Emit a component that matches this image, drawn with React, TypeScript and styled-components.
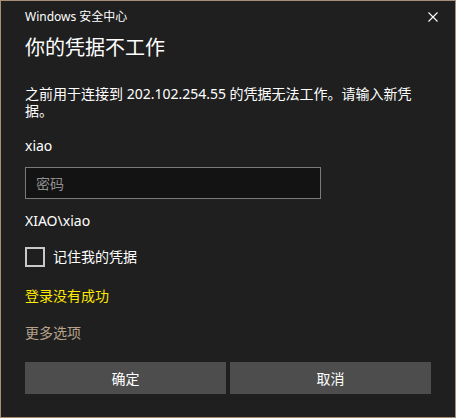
import React from "react";
import styled, { createGlobalStyle } from "styled-components";

const Global = createGlobalStyle`
  html, body { margin: 0; padding: 0; background: #1f1f1f; }
  * { box-sizing: border-box; }
`;

const FONT = `"Segoe UI", "Noto Sans", "Noto Sans CJK SC", sans-serif`;

const Window = styled.div`
  width: 456px;
  height: 418px;
  border: 1px solid #a68d74;
  background: #1f1f1f;
  color: #ffffff;
  font-family: ${FONT};
  display: flex;
  flex-direction: column;
`;

const TitleBar = styled.div`
  height: 32px;
  display: flex;
  align-items: center;
  justify-content: space-between;
  padding-left: 24px;
`;

const TitleText = styled.span`
  font-size: 12px;
  line-height: 16px;
  color: #ffffff;
`;

const CloseButton = styled.div`
  width: 44px;
  height: 32px;
  display: flex;
  align-items: center;
  justify-content: center;
`;

const Body = styled.div`
  display: flex;
  flex-direction: column;
  padding: 0 24px;
`;

const Heading = styled.div`
  font-size: 20px;
  line-height: 28px;
  margin-top: 1px;
`;

const Text = styled.div<{ $mt: number; $color?: string }>`
  font-size: 14px;
  line-height: 20px;
  margin-top: ${(p) => p.$mt}px;
  color: ${(p) => p.$color || "#ffffff"};
`;

const Paragraph = styled.div`
  font-size: 14px;
  line-height: 17px;
  margin-top: 23px;
  width: 406px;
  line-break: strict;
`;

const Input = styled.div`
  margin-top: 11px;
  width: 296px;
  height: 32px;
  border: 1px solid #7a7a7a;
  background: #131313;
  display: flex;
  align-items: center;
  padding-left: 10px;
  font-size: 14px;
  color: #8f8f8f;
`;

const CheckRow = styled.div`
  margin-top: 16px;
  display: flex;
  align-items: center;
  gap: 8px;
  height: 20px;
  font-size: 14px;
  line-height: 20px;
`;

const Box = styled.div`
  width: 20px;
  height: 20px;
  border: 2px solid #c9c9c9;
`;

const Buttons = styled.div`
  margin-top: 19px;
  display: grid;
  grid-template-columns: 1fr 1fr;
  gap: 4px;
`;

const Button = styled.div`
  height: 32px;
  background: #4d4d4d;
  display: flex;
  align-items: center;
  justify-content: center;
  font-size: 14px;
  color: #ffffff;
`;

export default function App() {
  return (
    <>
      <Global />
      <Window>
        <TitleBar>
          <TitleText>Windows 安全中心</TitleText>
          <CloseButton>
            <svg width="10" height="10" viewBox="0 0 10 10">
              <path d="M0.5 0.5 L9.5 9.5 M9.5 0.5 L0.5 9.5" stroke="#ffffff" strokeWidth="1.1" fill="none" />
            </svg>
          </CloseButton>
        </TitleBar>
        <Body>
          <Heading>你的凭据不工作</Heading>
          <Paragraph>之前用于连接到 202.102.254.55 的凭据无法工作。请输入新凭据。</Paragraph>
          <Text $mt={17}>xiao</Text>
          <Input>密码</Input>
          <Text $mt={12}>XIAO\xiao</Text>
          <CheckRow>
            <Box />
            <span>记住我的凭据</span>
          </CheckRow>
          <Text $mt={19} $color="#ffea00">登录没有成功</Text>
          <Text $mt={17} $color="#b7a18b">更多选项</Text>
          <Buttons>
            <Button>确定</Button>
            <Button>取消</Button>
          </Buttons>
        </Body>
      </Window>
    </>
  );
}
